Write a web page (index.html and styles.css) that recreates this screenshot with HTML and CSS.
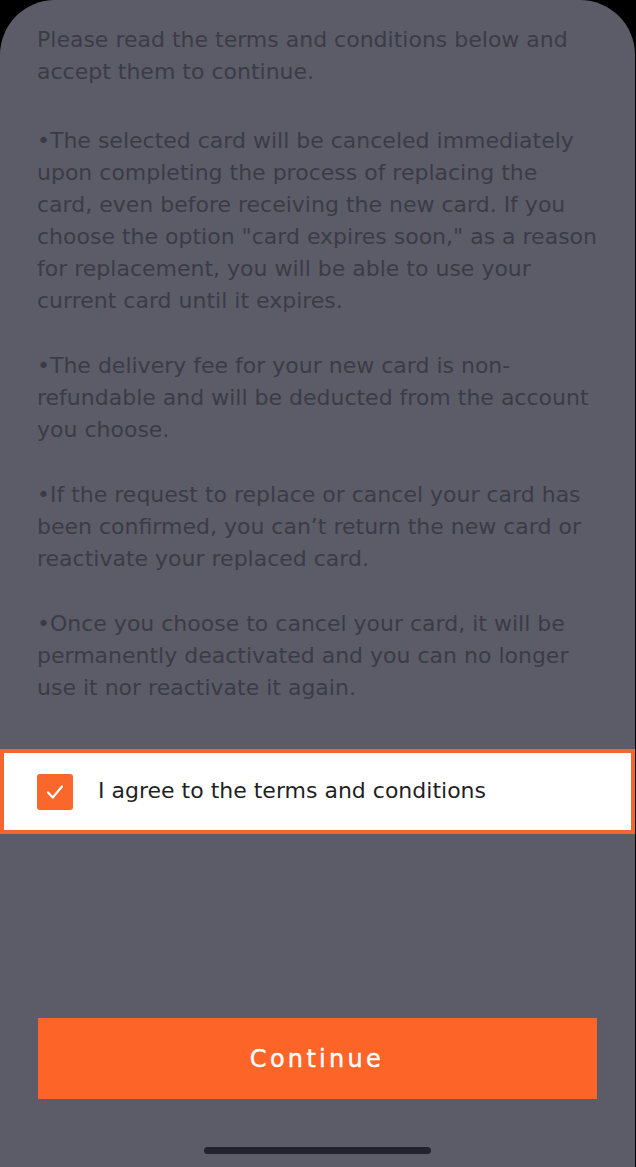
FILE: index.html
```html
<!DOCTYPE html>
<html lang="en">
<head>
<meta charset="utf-8">
<title>Terms and conditions</title>
<link rel="stylesheet" href="styles.css">
</head>
<body>
<div class="screen">
  <div class="terms">
    <p class="intro">Please read the terms and conditions below and<br>accept them to continue.</p>
    <p>•The selected card will be canceled immediately<br>upon completing the process of replacing the<br>card, even before receiving the new card. If you<br>choose the option "card expires soon," as a reason<br>for replacement, you will be able to use your<br>current card until it expires.</p>
    <p>•The delivery fee for your new card is non-<br>refundable and will be deducted from the account<br>you choose.</p>
    <p>•If the request to replace or cancel your card has<br>been confirmed, you can’t return the new card or<br>reactivate your replaced card.</p>
    <p>•Once you choose to cancel your card, it will be<br>permanently deactivated and you can no longer<br>use it nor reactivate it again.</p>
  </div>
  <label class="agree">
    <span class="checkbox">
      <svg viewBox="0 0 36 36" width="36" height="36" aria-hidden="true"><path d="M11 18.5 L15.8 23.5 L25 12.5" fill="none" stroke="#fff" stroke-width="2.2" stroke-linecap="round" stroke-linejoin="round"/></svg>
    </span>
    <span class="agree-text">I agree to the terms and conditions</span>
  </label>
  <div class="footer">
    <button class="continue" type="button">Continue</button>
    <div class="home-indicator"></div>
  </div>
</div>
</body>
</html>
```

FILE: styles.css
```css
html, body {
  margin: 0;
  padding: 0;
  background: #000;
}

.screen {
  width: 635px;
  height: 1167px;
  background: #5c5c68;
  border-radius: 55px 55px 0 0;
  display: flex;
  flex-direction: column;
  overflow: hidden;
}

.terms {
  padding: 24px 20px 0 37px;
  font-family: "DejaVu Sans", "Liberation Sans", sans-serif;
  font-size: 22px;
  line-height: 32px;
  color: #3b3b47;
}

.terms p {
  margin: 33px 0 0;
  white-space: nowrap;
}

.terms p.intro {
  margin-top: 0;
}

.terms p.intro + p {
  margin-top: 37px;
}

.agree {
  margin-top: 45px;
  height: 77px;
  border: 4px solid #f2672e;
  background: #fff;
  display: flex;
  align-items: center;
  padding-left: 33px;
  gap: 25px;
}

.checkbox {
  width: 36px;
  height: 36px;
  border-radius: 3px;
  background: #fa672b;
  display: flex;
}

.agree-text {
  font-family: "DejaVu Sans", "Liberation Sans", sans-serif;
  font-size: 22px;
  color: #1f1f24;
  margin-top: -3px;
}

.footer {
  margin-top: auto;
  display: flex;
  flex-direction: column;
  align-items: center;
  padding-bottom: 13px;
}

.continue {
  width: 559px;
  height: 81px;
  border: 0;
  border-radius: 0;
  background: #fc6428;
  color: #fff;
  font-family: "DejaVu Sans", "Liberation Sans", sans-serif;
  font-size: 24px;
  font-weight: normal;
  letter-spacing: 3.3px;
  -webkit-text-stroke: 0.4px #fff;
  margin-left: -1px;
}

.home-indicator {
  margin-top: 48px;
  width: 227px;
  height: 7px;
  border-radius: 4px;
  background: #23232f;
}
```
